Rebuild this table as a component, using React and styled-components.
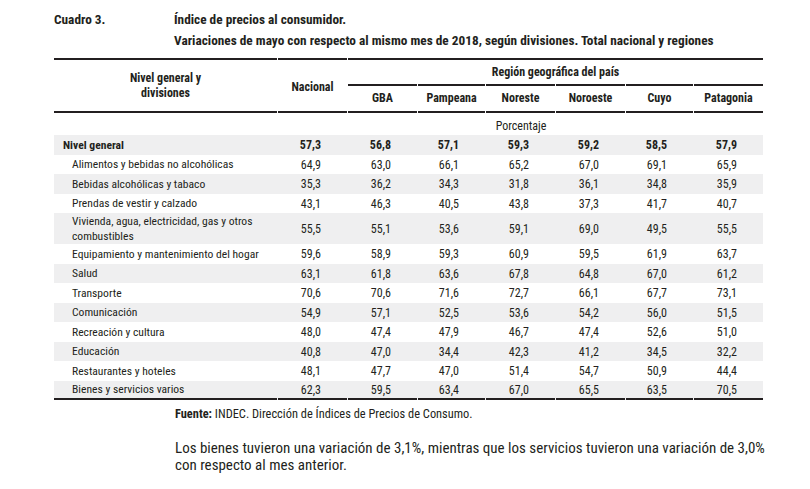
import React from "react";
import styled, { createGlobalStyle } from "styled-components";

const GlobalStyle = createGlobalStyle`
  html, body {
    margin: 0;
    padding: 0;
    background: #ffffff;
  }
  body {
    font-family: "Roboto Condensed", "Liberation Sans Narrow", "Liberation Sans", Arial, sans-serif;
    color: #231f20;
  }
`;

const COLS = "223px 69px 69px 67px 69px 69px 67px 69px";
const INK = "#231f20";

const Page = styled.div`
  width: 810px;
  height: 489px;
  padding: 9px 0 0 54px;
  box-sizing: border-box;
  overflow: hidden;
`;

const TitleBlock = styled.div`
  display: grid;
  grid-template-columns: 120px 1fr;
  font-weight: 700;
  font-size: 13.3px;
  line-height: 21px;
  margin-bottom: 7px;
`;

const TitleLines = styled.div`
  display: flex;
  flex-direction: column;
`;

const Table = styled.div`
  width: 709px;
  font-size: 12px;
`;

const Head = styled.div`
  display: grid;
  grid-template-columns: ${COLS};
  grid-template-rows: 26px 29px;
  column-gap: 1px;
  font-weight: 700;
`;

const HeadCell = styled.div`
  display: flex;
  align-items: center;
  justify-content: center;
  text-align: center;
  line-height: 15px;
  box-sizing: border-box;
  grid-column: ${(p) => p.$col || "auto"};
  grid-row: ${(p) => p.$row || "auto"};
  border-top: ${(p) => (p.$top ? `2px solid ${INK}` : "none")};
  border-bottom: ${(p) => (p.$bottom ? `2px solid ${INK}` : "none")};
  padding-top: ${(p) => p.$pt || 0}px;
`;

const UnitRow = styled.div`
  display: grid;
  grid-template-columns: ${COLS};
  height: 22px;
  align-items: end;
`;

const UnitLabel = styled.div`
  grid-column: 2 / 9;
  text-align: center;
  padding-left: 9px;
  line-height: 15px;
  padding-bottom: 1px;
`;

const Row = styled.div`
  display: grid;
  grid-template-columns: ${COLS};
  column-gap: 1px;
  min-height: 19.5px;
  background: ${(p) => (p.$shade ? "#efeff0" : "#ffffff")};
  font-weight: ${(p) => (p.$strong ? 700 : 400)};
`;

const Label = styled.div`
  display: flex;
  align-items: center;
  padding: 1px 4px 0 ${(p) => (p.$strong ? 9 : 18)}px;
  font-size: 11.6px;
  line-height: 15px;
  border-bottom: ${(p) => (p.$last ? `2px solid ${INK}` : "none")};
`;

const Num = styled.div`
  display: flex;
  align-items: center;
  justify-content: flex-end;
  padding: 1px 26px 0 0;
  border-bottom: ${(p) => (p.$last ? `2px solid ${INK}` : "none")};
`;

const Source = styled.div`
  margin: 6px 0 0 121px;
  font-size: 12.4px;
  line-height: 15px;
`;

const Note = styled.p`
  margin: 19px 0 0 121px;
  font-size: 15px;
  line-height: 17px;
  width: 605px;
`;

const regions = ["GBA", "Pampeana", "Noreste", "Noroeste", "Cuyo", "Patagonia"];

const rows = [
  ["Nivel general", ["57,3", "56,8", "57,1", "59,3", "59,2", "58,5", "57,9"], true],
  ["Alimentos y bebidas no alcohólicas", ["64,9", "63,0", "66,1", "65,2", "67,0", "69,1", "65,9"]],
  ["Bebidas alcohólicas y tabaco", ["35,3", "36,2", "34,3", "31,8", "36,1", "34,8", "35,9"]],
  ["Prendas de vestir y calzado", ["43,1", "46,3", "40,5", "43,8", "37,3", "41,7", "40,7"]],
  ["Vivienda, agua, electricidad, gas y otros combustibles", ["55,5", "55,1", "53,6", "59,1", "69,0", "49,5", "55,5"]],
  ["Equipamiento y mantenimiento del hogar", ["59,6", "58,9", "59,3", "60,9", "59,5", "61,9", "63,7"]],
  ["Salud", ["63,1", "61,8", "63,6", "67,8", "64,8", "67,0", "61,2"]],
  ["Transporte", ["70,6", "70,6", "71,6", "72,7", "66,1", "67,7", "73,1"]],
  ["Comunicación", ["54,9", "57,1", "52,5", "53,6", "54,2", "56,0", "51,5"]],
  ["Recreación y cultura", ["48,0", "47,4", "47,9", "46,7", "47,4", "52,6", "51,0"]],
  ["Educación", ["40,8", "47,0", "34,4", "42,3", "41,2", "34,5", "32,2"]],
  ["Restaurantes y hoteles", ["48,1", "47,7", "47,0", "51,4", "54,7", "50,9", "44,4"]],
  ["Bienes y servicios varios", ["62,3", "59,5", "63,4", "67,0", "65,5", "63,5", "70,5"]],
];

export default function App() {
  return (
    <>
      <GlobalStyle />
      <Page>
        <TitleBlock>
          <div>Cuadro 3.</div>
          <TitleLines>
            <span>Índice de precios al consumidor.</span>
            <span>
              Variaciones de mayo con respecto al mismo mes de 2018, según
              divisiones. Total nacional y regiones
            </span>
          </TitleLines>
        </TitleBlock>

        <Table>
          <Head>
            <HeadCell $col="1" $row="1 / 3" $top $bottom $pt={1}>
              Nivel general y
              <br />
              divisiones
            </HeadCell>
            <HeadCell $col="2" $row="1 / 3" $top $bottom $pt={3}>
              Nacional
            </HeadCell>
            <HeadCell $col="3 / 9" $row="1" $top>
              Región geográfica del país
            </HeadCell>
            {regions.map((r) => (
              <HeadCell key={r} $row="2" $top $bottom>
                {r}
              </HeadCell>
            ))}
          </Head>

          <UnitRow>
            <UnitLabel>Porcentaje</UnitLabel>
          </UnitRow>

          {rows.map(([label, values, strong], i) => {
            const last = i === rows.length - 1;
            return (
              <Row key={label} $shade={i % 2 === 0} $strong={strong}>
                <Label $strong={strong} $last={last}>
                  {label === "Vivienda, agua, electricidad, gas y otros combustibles" ? (
                    <span>
                      Vivienda, agua, electricidad, gas y otros
                      <br />
                      combustibles
                    </span>
                  ) : (
                    label
                  )}
                </Label>
                {values.map((v, j) => (
                  <Num key={j} $last={last}>
                    {v}
                  </Num>
                ))}
              </Row>
            );
          })}
        </Table>

        <Source>
          <b>Fuente:</b> INDEC. Dirección de Índices de Precios de Consumo.
        </Source>

        <Note>
          Los bienes tuvieron una variación de 3,1%, mientras que los servicios
          tuvieron una variación de 3,0% con respecto al mes anterior.
        </Note>
      </Page>
    </>
  );
}
